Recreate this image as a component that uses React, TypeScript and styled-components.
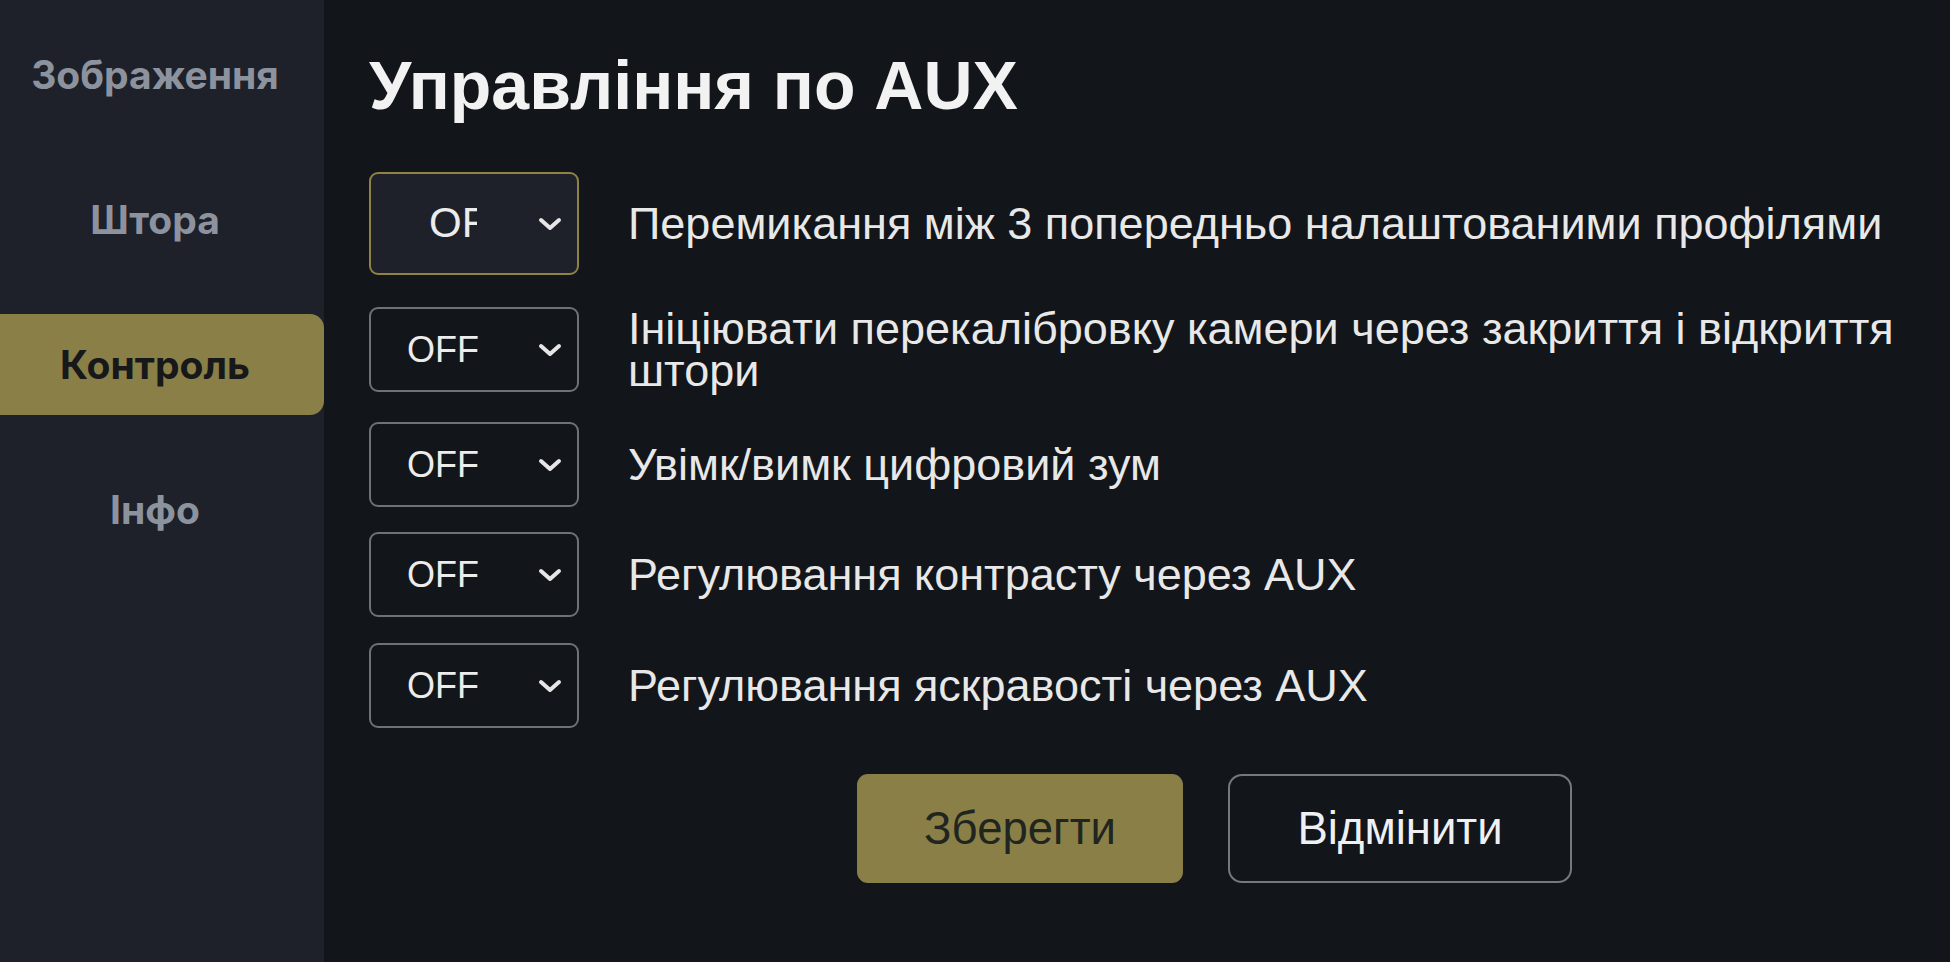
import React from "react";
import styled, { createGlobalStyle } from "styled-components";

const Global = createGlobalStyle`
  html, body { margin: 0; padding: 0; background: #121519; }
  body { font-family: "Liberation Sans", Arial, sans-serif; }
  #root { min-height: 100vh; }
`;

const Page = styled.div`
  display: flex;
  height: 962px;
  width: 1950px;
  overflow: hidden;
  background: #121519;
`;

const Sidebar = styled.nav`
  width: 324px;
  flex: none;
  background: #1e2129;
  display: flex;
  flex-direction: column;
  gap: 44px;
  padding-top: 24px;
  box-sizing: border-box;
`;

const NavItem = styled.div<{ $active?: boolean }>`
  height: 101px;
  display: flex;
  align-items: center;
  justify-content: center;
  padding-right: 14px;
  font-family: Inter, "Noto Sans", sans-serif;
  font-weight: 700;
  font-size: 39px;
  color: ${(p) => (p.$active ? "#16181a" : "#8d939e")};
  background: ${(p) => (p.$active ? "#8a7f46" : "transparent")};
  border-radius: 0 14px 14px 0;
`;

const Main = styled.main`
  flex: 1;
  padding: 52px 20px 0 45px;
  box-sizing: border-box;
`;

const Title = styled.h1`
  margin: 0;
  font-family: "Liberation Sans", Arial, sans-serif;
  font-weight: 700;
  font-size: 68px;
  line-height: 66px;
  color: #f2f2f2;
`;

const Rows = styled.div`
  display: flex;
  flex-direction: column;
  margin-top: 54px;
`;

const Row = styled.div<{ $space: number }>`
  display: flex;
  align-items: center;
  gap: 49px;
  margin-top: ${(p) => p.$space}px;
`;

const SelectBox = styled.div<{ $focused?: boolean }>`
  flex: none;
  width: 210px;
  height: ${(p) => (p.$focused ? 103 : 85)}px;
  box-sizing: border-box;
  border: 2px solid ${(p) => (p.$focused ? "#8f8243" : "#6e7176")};
  border-radius: 9px;
  background: ${(p) => (p.$focused ? "#1e2129" : "#121519")};
  display: flex;
  align-items: center;
  color: #ececec;
  font-family: "Liberation Sans", Arial, sans-serif;
`;

const ValueClip = styled.div<{ $focused?: boolean }>`
  overflow: hidden;
  white-space: nowrap;
  margin-left: ${(p) => (p.$focused ? 58 : 36)}px;
  width: ${(p) => (p.$focused ? 48 : 90)}px;
  font-size: ${(p) => (p.$focused ? 42 : 36)}px;
  line-height: 1.25;
`;

const Chevron = styled.svg`
  margin-left: auto;
  margin-right: 15px;
  width: 24px;
  height: 16px;
  flex: none;
`;

const Label = styled.div`
  font-family: "Liberation Sans", Arial, sans-serif;
  font-size: 45px;
  line-height: 42px;
  color: #e8e8e8;
  max-width: 1300px;
`;

const ButtonRow = styled.div`
  display: flex;
  gap: 45px;
  margin-top: 46px;
  padding-left: 488px;
`;

const Button = styled.button<{ $primary?: boolean }>`
  height: 109px;
  width: ${(p) => (p.$primary ? 326 : 344)}px;
  box-sizing: border-box;
  border-radius: ${(p) => (p.$primary ? 11 : 14)}px;
  border: ${(p) => (p.$primary ? "none" : "2px solid #75787d")};
  background: ${(p) => (p.$primary ? "#8a7f46" : "#121519")};
  color: ${(p) => (p.$primary ? "#20251f" : "#eef0f4")};
  font-family: "Liberation Sans", Arial, sans-serif;
  font-size: 45.5px;
  padding: 0;
  cursor: pointer;
`;

const navItems = ["Зображення", "Штора", "Контроль", "Інфо"];

const rows = [
  { text: "Перемикання між 3 попередньо налаштованими профілями", space: 0, focused: true },
  { text: "Ініціювати перекалібровку камери через закриття і відкриття штори", space: 32 },
  { text: "Увімк/вимк цифровий зум", space: 30 },
  { text: "Регулювання контрасту через AUX", space: 25 },
  { text: "Регулювання яскравості через AUX", space: 26 },
];

function Select({ focused }: { focused?: boolean }) {
  return (
    <SelectBox $focused={focused}>
      <ValueClip $focused={focused}>OFF</ValueClip>
      <Chevron viewBox="0 0 24 16">
        <path d="M3 4 L12 12 L21 4" fill="none" stroke="#e6e6e6" strokeWidth="4" strokeLinecap="round" strokeLinejoin="round" />
      </Chevron>
    </SelectBox>
  );
}

export default function App() {
  return (
    <>
      <Global />
      <Page>
        <Sidebar>
          {navItems.map((n) => (
            <NavItem key={n} $active={n === "Контроль"}>
              {n}
            </NavItem>
          ))}
        </Sidebar>
        <Main>
          <Title>Управління по AUX</Title>
          <Rows>
            {rows.map((r) => (
              <Row key={r.text} $space={r.space}>
                <Select focused={r.focused} />
                <Label>{r.text}</Label>
              </Row>
            ))}
          </Rows>
          <ButtonRow>
            <Button $primary>Зберегти</Button>
            <Button>Відмінити</Button>
          </ButtonRow>
        </Main>
      </Page>
    </>
  );
}
